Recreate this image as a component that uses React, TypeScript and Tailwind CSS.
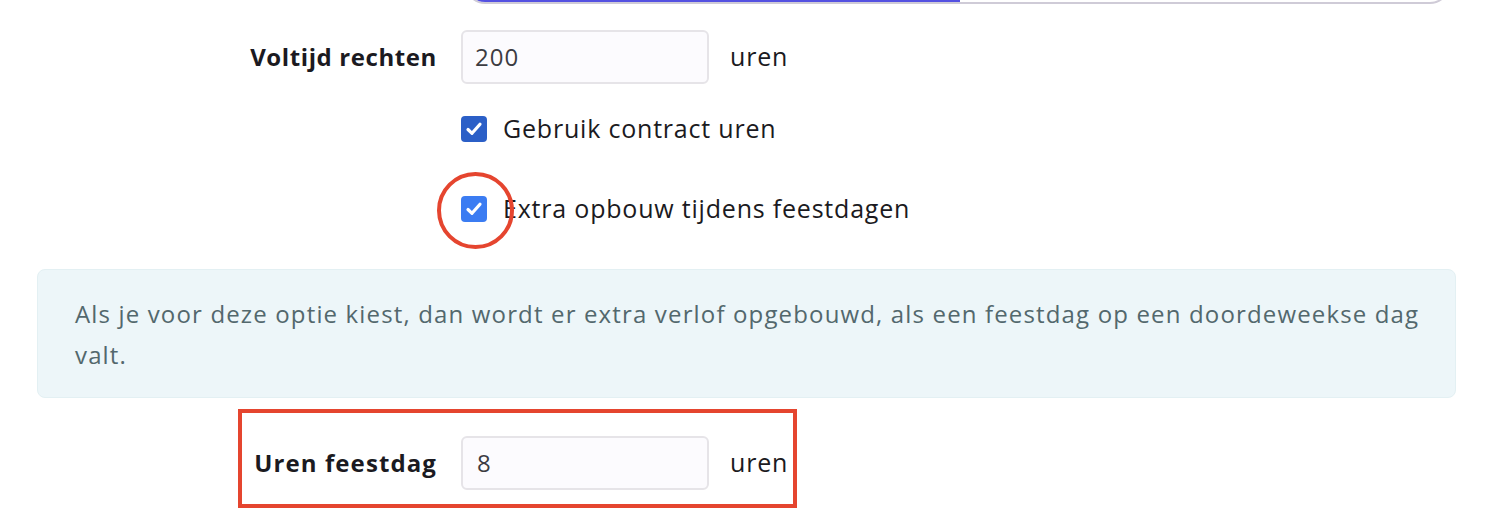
import React from "react";

function Check({ dark }: { dark?: boolean }) {
  return (
    <div
      className={
        "w-[26px] h-[26px] rounded-[4px] flex items-center justify-center " +
        (dark ? "bg-[#2b5fc7]" : "bg-[#3b7cf2]")
      }
    >
      <svg width="20" height="20" viewBox="0 0 20 20" fill="none">
        <path d="M4 10.5 L8 14.3 L16 5.2" stroke="white" strokeWidth="3.2" strokeLinecap="round" strokeLinejoin="round" />
      </svg>
    </div>
  );
}

export default function App() {
  return (
    <div className="w-[1488px] h-[512px] bg-white overflow-hidden font-['Open_Sans',sans-serif] text-[#1b1a21]">
      <div className="ml-[465px] w-[985px] h-[40px] -mt-[36px] rounded-[22px] border-2 border-[#cfcbd7] overflow-hidden bg-white">
        <div className="h-full w-[493px] bg-[#5451e1]" />
      </div>

      <div className="mt-[26px] flex items-center">
        <div className="w-[437px] text-right font-bold text-[24px] tracking-[0.6px]">Voltijd rechten</div>
        <div className="ml-6 w-[248px] h-[54px] rounded-[6px] border-2 border-[#e6e4e8] bg-[#fcfbfe] flex items-center pl-[12px] text-[24px] tracking-[1px] text-[#3c3c42]">
          200
        </div>
        <div className="ml-[21px] text-[25px] tracking-[0.8px]">uren</div>
      </div>

      <div className="mt-[30px] ml-[461px] flex items-center h-[30px]">
        <Check dark />
        <span className="ml-4 text-[25px] tracking-[0.8px]">Gebruik contract uren</span>
      </div>

      <div className="mt-[50px] ml-[461px] flex items-center h-[30px] relative">
        <Check />
        <span className="ml-4 text-[25px] tracking-[0.8px]">Extra opbouw tijdens feestdagen</span>
        <div className="absolute left-[-24px] top-[-22px] w-[77px] h-[77px] rounded-full border-[4px] border-[#e5452f]" />
      </div>

      <div className="mt-[45px] ml-[37px] w-[1419px] h-[129px] rounded-[8px] border border-[#e3f0f3] bg-[#edf6f9] pl-[37px] pr-[25px] pt-[23px] text-[24px] tracking-[1.15px] leading-[41px] text-[#53686d]">
        Als je voor deze optie kiest, dan wordt er extra verlof opgebouwd, als een feestdag op een doordeweekse dag valt.
      </div>

      <div className="mt-[11px] ml-[238px] w-[559px] h-[99px] border-[4px] border-[#e5452f] pt-[23px]">
        <div className="flex items-center">
          <div className="w-[195px] text-right font-bold text-[24px] tracking-[1.1px]">Uren feestdag</div>
          <div className="ml-6 w-[248px] h-[54px] rounded-[6px] border-2 border-[#e6e4e8] bg-[#fcfbfe] flex items-center pl-[14px] text-[24px] text-[#3c3c42]">
            8
          </div>
          <div className="ml-[21px] text-[25px] tracking-[0.8px]">uren</div>
        </div>
      </div>
    </div>
  );
}
